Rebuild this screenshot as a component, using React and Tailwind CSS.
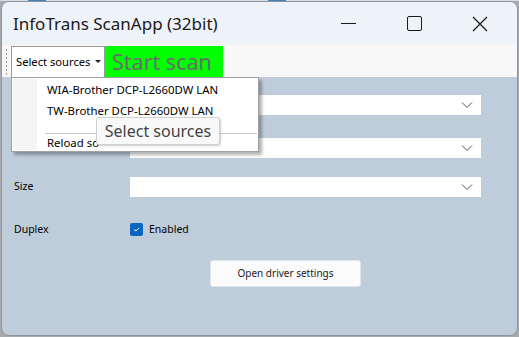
const font = { fontFamily: '"Noto Sans", "Open Sans", sans-serif' };

function Chevron() {
  return (
    <svg width="12" height="8" viewBox="0 0 12 8" className="mr-[8px]">
      <path d="M1 1.5 L6 6.5 L11 1.5" fill="none" stroke="#555" strokeWidth="1" />
    </svg>
  );
}

function Combo({ className = "" }) {
  return (
    <div className={`h-[20px] w-[351px] bg-white flex items-center justify-end ${className}`}>
      <Chevron />
    </div>
  );
}

export default function App() {
  return (
    <div className="w-[519px] h-[337px] bg-[#a7a9ad] relative overflow-hidden" style={font}>
      {/* desktop bits behind */}
      <div className="absolute left-0 top-0 w-[519px] h-[1px] bg-[#d8dbe0]" />
      <div className="absolute left-[28px] top-0 w-[18px] h-[2px] bg-[#3b82c4]" />
      <div className="absolute left-[268px] top-0 w-[18px] h-[2px] bg-[#3b82c4]" />

      {/* WINDOW */}
      <div className="absolute left-[1px] top-[1px] w-[517px] h-[335px] rounded-[8px] overflow-hidden flex flex-col bg-[#bfcddb] border border-[#8f959c]">
        {/* TITLE BAR */}
        <div className="h-[43px] bg-[#eef2f9] flex items-center shrink-0">
          <span className="ml-[11px] text-[17px] text-[#1a1a1a]">
            InfoTrans ScanApp (32bit)
          </span>
          <div className="ml-auto flex items-center">
            <div className="w-[66px] flex justify-center">
              <div className="w-[15px] h-[1px] bg-[#1a1a1a]" />
            </div>
            <div className="w-[66px] flex justify-center">
              <div className="w-[15px] h-[15px] border-[1.5px] border-[#1a1a1a] rounded-[2px]" />
            </div>
            <div className="w-[66px] flex justify-center mr-[4px]">
              <svg width="16" height="16" viewBox="0 0 16 16">
                <path d="M1 1 L15 15 M15 1 L1 15" stroke="#1a1a1a" strokeWidth="1.3" />
              </svg>
            </div>
          </div>
        </div>

        {/* TOOLBAR */}
        <div className="h-[32px] bg-[#f8f8f8] flex items-stretch shrink-0 pt-[1px]">
          <div className="w-[9px] flex flex-col items-center justify-center gap-[2px]">
            {[0, 1, 2, 3, 4, 5, 6].map((i) => (
              <div key={i} className="w-[1px] h-[2px] bg-[#9a9a9a]" />
            ))}
          </div>
          <div className="w-[94px] bg-white border border-b-0 border-[#9a9a9a] flex items-center pl-[4px] text-[11.2px] text-black whitespace-nowrap">
            Select sources
            <svg width="6" height="4" viewBox="0 0 6 4" className="ml-[5px]">
              <path d="M0 0 L6 0 L3 3 Z" fill="#222" />
            </svg>
          </div>
          <div className="w-[118px] bg-[#00ff00] flex items-center pl-[7px] text-[21.5px] text-[#6b6b6b] leading-none whitespace-nowrap">
            Start scan
          </div>
        </div>

        {/* BODY */}
        <div className="flex-1 relative">
          <div className="grid grid-cols-[128px_1fr] items-center pt-[18px] text-[10.5px] text-black">
            <div />
            <Combo />
            <div className="mt-[23px]" />
            <Combo className="mt-[23px]" />
            <div className="pl-[12px] mt-[19px]">Size</div>
            <Combo className="mt-[19px]" />
            <div className="pl-[12px] mt-[25px]">Duplex</div>
            <div className="mt-[25px] flex items-center">
              <div className="w-[13px] h-[13px] rounded-[2px] bg-[#0a64c2] flex items-center justify-center">
                <svg width="7" height="5" viewBox="0 0 7 5">
                  <path d="M1 2.5 L3 4 L6 1" fill="none" stroke="white" strokeWidth="1" />
                </svg>
              </div>
              <span className="ml-[6px]">Enabled</span>
            </div>
          </div>
          <div className="flex justify-center pl-[52px] mt-[22px]">
            <div className="w-[151px] h-[27px] bg-[#fbfbfb] border border-[#e2e5e9] rounded-[3px] flex items-center justify-center text-[10px] text-[#1a1a1a]">
              Open driver settings
            </div>
          </div>

          {/* DROPDOWN MENU */}
          <div className="absolute left-[9px] top-0 w-[248px] h-[75px] bg-white border border-[#a0a0a0] shadow-[3px_3px_3px_rgba(0,0,0,0.3)] flex text-[11.4px] text-black">
            <div className="w-[24px] bg-[#f5f5f5] my-[1px] ml-[1px]" />
            <div className="flex-1 flex flex-col">
              <div className="h-[22px] flex items-end pl-[10px]">WIA-Brother DCP-L2660DW LAN</div>
              <div className="h-[22px] flex items-end pl-[10px]">TW-Brother DCP-L2660DW LAN</div>
              <div className="h-[1px] bg-[#c8c8c8] mt-[14px] ml-[8px] mr-[1px]" />
              <div className="h-[18px] flex items-center pl-[10px] whitespace-nowrap">Reload so</div>
            </div>
          </div>

          {/* TOOLTIP */}
          <div className="absolute left-[94px] top-[40px] w-[124px] h-[28px] bg-[#f9f9f9] border border-[#d0d0d0] rounded-[3px] shadow-[1px_1px_2px_rgba(0,0,0,0.2)] flex items-center justify-center text-[16px] text-[#444]">
            Select sources
          </div>
        </div>
      </div>
    </div>
  );
}
